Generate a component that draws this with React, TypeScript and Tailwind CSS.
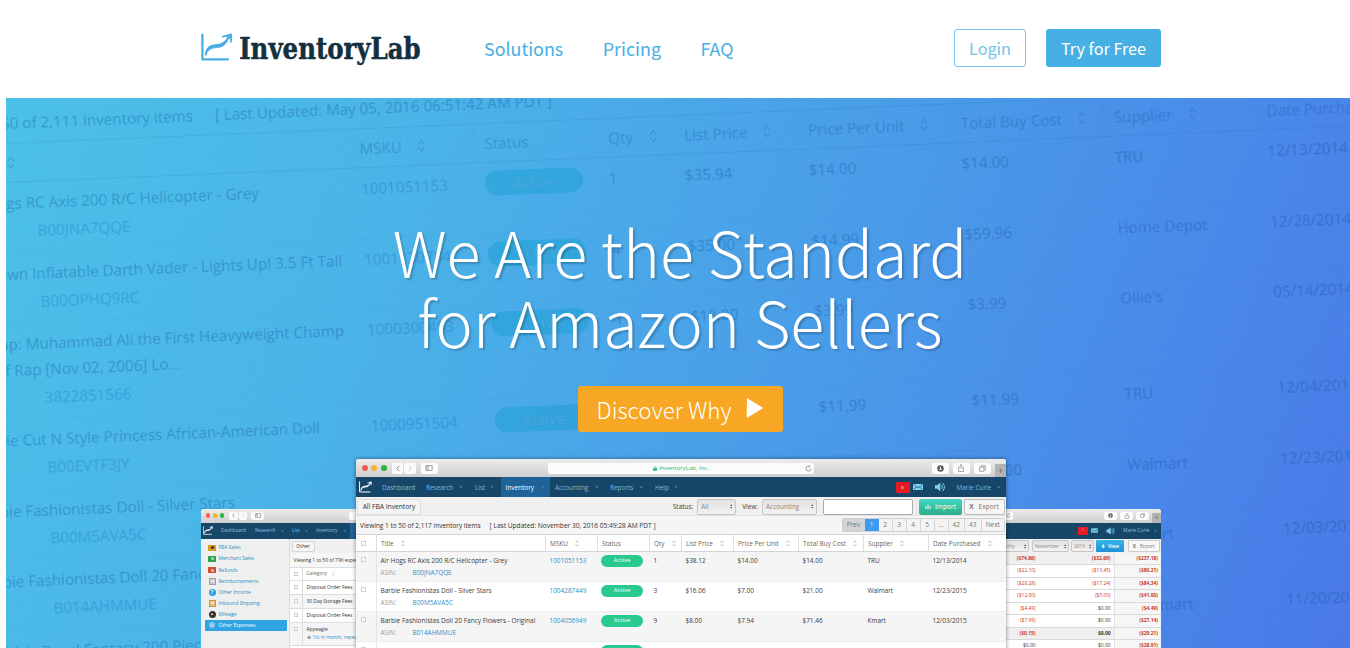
import React from "react";

const sans = "font-['Noto_Sans_CJK_SC','Source_Sans_Pro',sans-serif]";

function Swoosh({ className, color, width }: { className: string; color: string; width: number }) {
  return (
    <svg viewBox="0 0 32 28" className={className} fill="none" stroke={color} strokeWidth={width} strokeLinecap="round" strokeLinejoin="round">
      <path d="M1.4 1.5V26.3H27" />
      <path d="M4.8 21.5C5.5 15 9.5 12.4 14.5 12.2C20.5 12 24.6 10 27.6 4.2" strokeWidth={width * 0.9} />
      <path d="M4.8 21.5C5.5 15 9.5 12.4 14.5 12.2C20.5 12 24.6 10 27.6 4.2C25.6 11.5 22 14.2 15.5 14.6C10.5 15 7.2 16.5 4.8 21.5Z" fill={color} strokeWidth="0.8" />
      <path d="M21.8 3.6L30.2 1.4L29.9 8.8" strokeWidth={width * 0.8} />
      <path d="M25.5 3.2L30.2 1.4L29.4 6Z" fill={color} strokeWidth="0.6" />
    </svg>
  );
}

function Sort({ className = "" }: { className?: string }) {
  return (
    <svg viewBox="0 0 8 14" className={className} fill="none" stroke="currentColor" strokeWidth="1.3" strokeLinejoin="round">
      <path d="M1 5.5L4 1.5L7 5.5M1 8.5L4 12.5L7 8.5" />
    </svg>
  );
}

/* ---------- faded inventory table behind the headline ---------- */

type Item = { title: string[]; ends?: number[]; asin: string; msku: string; vals: string[]; tall?: boolean };

const backdrop: Item[] = [
  { title: ["Air Hogs RC Axis 200 R/C Helicopter - Grey"], asin: "B00JNA7QQE", msku: "1001051153", vals: ["1", "$35.94", "$14.00", "$14.00", "TRU", "12/13/2014"] },
  { title: ["8' Blown Inflatable Darth Vader - Lights Up! 3.5 Ft Tall"], ends: [377], asin: "B00OPHQ9RC", msku: "1001130784", vals: ["4", "$35.00", "$14.99", "$59.96", "Home Depot", "12/28/2014"] },
  { title: ["Rap: Muhammad Ali the First Heavyweight Champ", "of Rap [Nov 02, 2006] Lo..."], ends: [376, 211], asin: "3822851566", msku: "1000300493", vals: ["1", "$18.00", "$3.99", "$3.99", "Ollie's", "05/14/2014"], tall: true },
  { title: ["Barbie Cut N Style Princess African-American Doll"], asin: "B00EVTF3JY", msku: "1000951504", vals: ["1", "$25.00", "$11.99", "$11.99", "TRU", "12/04/2014"] },
  { title: ["Barbie Fashionistas Doll - Silver Stars"], asin: "B00M5AVA5C", msku: "1004287449", vals: ["3", "$16.06", "$7.00", "$21.00", "Walmart", "12/23/2015"] },
  { title: ["Barbie Fashionistas Doll 20 Fancy Flowers"], asin: "B014AHMMUE", msku: "1004056949", vals: ["9", "$8.00", "$7.94", "$71.46", "Kmart", "12/03/2015"] },
  { title: ["Barbie's Royal Fantasy 200 Piece Playset"], asin: "B00T0MJ2XK", msku: "1004056950", vals: ["2", "$12.00", "$7.94", "$15.88", "Walmart", "11/20/2015"] },
];

const bgCols: [string, string][] = [
  ["Qty", "w-[76px]"],
  ["List Price", "w-[124px]"],
  ["Price Per Unit", "w-[153px]"],
  ["Total Buy Cost", "w-[153px]"],
  ["Supplier", "w-[153px]"],
  ["Date Purchased", "w-[200px]"],
];

function Backdrop() {
  return (
    <div className="absolute left-0 top-0 w-[1500px] origin-top-left -rotate-[2.4deg] whitespace-nowrap font-['Open_Sans',sans-serif] text-[15.2px] leading-[20px] text-[#0a4a96]/25 [text-shadow:0_0_1px_rgba(10,74,150,0.12)]">
      <div className="-ml-[58px] w-[1560px]">
        <div className="flex h-[46px] items-center border-b border-[#0a4a96]/10 pt-[4px]">
          <span className="flex w-[244px] shrink-0 justify-end">Viewing 1 to 50 of 2,111 inventory items</span>
          <span className="ml-[22px]">[ Last Updated: May 05, 2016 06:51:42 AM PDT ]</span>
        </div>
        <div className="flex h-[39px] items-center border-b border-[#0a4a96]/10 text-[#0a4a96]/20">
          <span className="flex w-[399px] items-center gap-4 pl-[10px]">Title<Sort className="h-[14px] w-[8px]" /></span>
          <span className="flex h-full w-[124px] items-center gap-4 pl-[10px]">MSKU<Sort className="h-[14px] w-[8px]" /></span>
          <span className="flex h-full w-[124px] items-center border-l border-[#0a4a96]/5 pl-[10px]">Status</span>
          {bgCols.map(([name, w]) => (
            <span key={name} className={`flex h-full items-center gap-4 border-l border-[#0a4a96]/5 pl-[10px] ${w}`}>
              {name}
              <Sort className="h-[14px] w-[8px]" />
            </span>
          ))}
        </div>
        {backdrop.map((r) => (
          <div key={r.msku} className={`flex border-b border-[#0a4a96]/[0.04] pt-[10px] ${r.tall ? "h-[96px]" : "h-[70.5px]"}`}>
            <div className="w-[399px] pl-[10px]">
              {r.title.map((t, i) => (
                <div key={t} className={i ? "mt-[6px]" : ""}>
                  <div className={r.ends ? "flex justify-end" : ""} style={r.ends ? { width: r.ends[i] } : undefined}>{t}</div>
                </div>
              ))}
              <div className="mt-[8px] pl-[74px] text-[#0a82dc]/25">{r.asin}</div>
            </div>
            <span className="w-[124px] pl-[10px] text-[#0a72d0]/25">{r.msku}</span>
            <span className="w-[124px] pl-[10px]">
              <span className="-mt-[2px] flex h-[25px] w-[98px] items-center justify-center rounded-full bg-[#089cd0]/40 text-white/15">Active</span>
            </span>
            {r.vals.map((v, i) => (
              <span key={i} className={`pl-[10px] ${bgCols[i][1]}`}>{v}</span>
            ))}
          </div>
        ))}
      </div>
    </div>
  );
}

/* ---------- browser window parts ---------- */

function Chip({ className = "", children }: { className?: string; children?: React.ReactNode }) {
  return <span className={`flex shrink-0 items-center justify-center rounded-[2px] bg-[#fbfbfb] text-[#777] ${className}`}>{children}</span>;
}

const Chevron = ({ className, d, color }: { className: string; d: string; color: string }) => (
  <svg viewBox="0 0 6 10" className={className} fill="none" stroke={color} strokeWidth="1.3"><path d={d} /></svg>
);
const BACK = "M4.8 1L1.2 5L4.8 9";
const NEXT = "M1.2 1L4.8 5L1.2 9";
const Reload = ({ className }: { className: string }) => (
  <svg viewBox="0 0 10 10" className={className} fill="none" stroke="#888" strokeWidth="1.1"><path d="M8.5 5A3.5 3.5 0 1 1 6.2 1.8M5 .3L7 2L5 3.5" /></svg>
);
const Down = ({ className }: { className: string }) => (
  <svg viewBox="0 0 10 10" className={className}><circle cx="5" cy="5" r="4.6" fill="#555" /><path d="M5 2.2V7M3 5.2L5 7.4L7 5.2" stroke="#fff" strokeWidth="1.2" fill="none" /></svg>
);
const Share = ({ className }: { className: string }) => (
  <svg viewBox="0 0 10 10" className={className} fill="none" stroke="#888" strokeWidth=".9"><path d="M3.5 4H2V9.4H8V4H6.5M5 6V.7M3.3 2.3L5 .7L6.7 2.3" /></svg>
);
const Tabs = ({ className }: { className: string }) => (
  <svg viewBox="0 0 10 10" className={className} fill="none" stroke="#777" strokeWidth=".9"><path d="M1 3H7V9H1ZM3 3V1H9V7H7" /></svg>
);
const Panel = ({ className }: { className: string }) => (
  <svg viewBox="0 0 10 8" className={className} fill="none" stroke="#777" strokeWidth=".9"><path d="M.8 .8H9.2V7.2H.8ZM3.7 .8V7.2M1.5 2.4H3M1.5 4H3" /></svg>
);
const Mail = ({ className }: { className: string }) => (
  <svg viewBox="0 0 10 6" className={className}><rect width="10" height="6" rx=".6" fill="#7fd0f5" /><path d="M.8 .8L5 3.8L9.2 .8M.8 5.3L3.4 3M9.2 5.3L6.6 3" stroke="#164668" strokeWidth=".7" fill="none" /></svg>
);
const Speaker = ({ className }: { className: string }) => (
  <svg viewBox="0 0 12 11" className={className}><path d="M.5 3.5H3L6.3 .5V10.5L3 7.5H.5Z" fill="#7fd0f5" /><path d="M7.8 3.3Q9.3 5.5 7.8 7.7M8.8 1Q13 5.5 8.8 10" stroke="#7fd0f5" strokeWidth="1.1" fill="none" /></svg>
);
const Caret = ({ className }: { className: string }) => (
  <svg viewBox="0 0 6 4" className={className}><path d="M0 .3H6L3 3.8Z" fill="#3585b5" /></svg>
);
const UpDown = ({ className }: { className: string }) => (
  <svg viewBox="0 0 4 8" className={className} fill="#666"><path d="M0 3.3L2 .4L4 3.3ZM0 4.7L2 7.6L4 4.7Z" /></svg>
);

function Dots({ size, gap }: { size: string; gap: string }) {
  return (
    <span className={`flex ${gap}`}>
      <i className={`rounded-full bg-[#fb5a52] ${size}`} />
      <i className={`rounded-full bg-[#f6b52e] ${size}`} />
      <i className={`rounded-full bg-[#2bb53c] ${size}`} />
    </span>
  );
}

function Select({ label, className }: { label: string; className: string }) {
  return (
    <span className={`flex items-center justify-between rounded-[2px] border border-[#c6c6c6] bg-linear-to-b from-[#e2e2e2] to-[#f2f2f2] text-[#888] ${className}`}>
      {label}
      <UpDown className="h-[5px] w-[2.5px]" />
    </span>
  );
}

const Box = ({ className }: { className: string }) => <i className={`block border border-[#cfcfcf] bg-white ${className}`} />;

/* ---------- front window ---------- */

const items = [
  ["Air Hogs RC Axis 200 R/C Helicopter - Grey", "B00JNA7QQE", "1001051153", "1", "$38.12", "$14.00", "$14.00", "TRU", "12/13/2014"],
  ["Barbie Fashionistas Doll - Silver Stars", "B00M5AVA5C", "1004287449", "3", "$16.06", "$7.00", "$21.00", "Walmart", "12/23/2015"],
  ["Barbie Fashionistas Doll 20 Fancy Flowers - Original", "B014AHMMUE", "1004056949", "9", "$8.00", "$7.94", "$71.46", "Kmart", "12/03/2015"],
  ["", "", "", "", "", "", "", "", ""],
];
const fw = ["w-[169px]", "w-[52px]", "w-[52px]", "w-[32px]", "w-[52px]", "w-[65px]", "w-[65px]", "w-[65px]", "w-[77px]"];
const heads = ["Title", "MSKU", "Status", "Qty", "List Price", "Price Per Unit", "Total Buy Cost", "Supplier", "Date Purchased"];

function FrontWindow() {
  return (
    <div className="absolute left-[155px] top-0 h-[200px] w-[650px] overflow-hidden whitespace-nowrap rounded-t-[3px] bg-white font-['Open_Sans',sans-serif] text-[6.45px] leading-[9px] text-[#3c3c3c] shadow-[0_0_4px_rgba(0,0,0,0.45)]">
      <div className="flex h-[18px] items-center bg-linear-to-b from-[#ececec] to-[#cfcfcf] pl-[6px]">
        <Dots size="size-[6px]" gap="gap-[3.3px]" />
        <Chip className="ml-[5.4px] h-[11px] w-[11.5px]"><Chevron className="h-[7px] w-[4px]" d={BACK} color="#777" /></Chip>
        <Chip className="ml-px h-[11px] w-[11.5px]"><Chevron className="h-[7px] w-[4px]" d={NEXT} color="#c4c4c4" /></Chip>
        <Chip className="ml-[5px] h-[11px] w-[17px]"><Panel className="h-[6px] w-[8px]" /></Chip>
        <Chip className="relative ml-[110px] h-[11px] w-[266px] gap-[2px] !text-[#2dba6a]">
          <svg viewBox="0 0 6 7" className="h-[5px] w-[4px]"><path d="M0 3H6V7H0Z" fill="#2dba6a" /><path d="M1.3 3V1.8Q3-.4 4.7 1.8V3" stroke="#2dba6a" fill="none" /></svg>
          <span className="text-[6px]">InventoryLab, Inc.</span>
          <span className="absolute right-[2px] top-[2px]"><Reload className="size-[7px]" /></span>
        </Chip>
        <Chip className="ml-[118px] h-[11px] w-[17px]"><Down className="size-[7px]" /></Chip>
        <Chip className="ml-[4px] h-[11px] w-[17px]"><Share className="size-[8px]" /></Chip>
        <Chip className="ml-[4px] h-[11px] w-[17px]"><Tabs className="size-[7px]" /></Chip>
        <span className="ml-auto mt-[5px] flex h-[13px] w-[11px] items-center justify-center bg-[#b3b3b3] text-[9px] text-[#666]">+</span>
      </div>
      <div className="flex h-[20px] items-center bg-[#164668] text-[#7fb9dc]">
        <Swoosh className="ml-[3px] h-[12px] w-[13px]" color="#fff" width={2.4} />
        <span className="ml-[10px] w-[44px]">Dashboard</span>
        <span className="flex w-[49px] items-center justify-between pr-[12px]">Research<Caret className="h-[2.5px] w-[4px]" /></span>
        <span className="flex w-[26px] items-center justify-between pr-[7px]">List<Caret className="h-[2.5px] w-[4px]" /></span>
        <span className="flex h-full w-[49px] items-center justify-between bg-[#20629a] pl-[4.5px] pr-[5px] text-white">Inventory<Caret className="h-[2.5px] w-[4px]" /></span>
        <span className="flex w-[55px] items-center justify-between pl-[5px] pr-[6px]">Accounting<Caret className="h-[2.5px] w-[4px]" /></span>
        <span className="flex w-[45px] items-center justify-between pl-[5px] pr-[7px]">Reports<Caret className="h-[2.5px] w-[4px]" /></span>
        <span className="flex w-[30px] items-center justify-between pl-[5px] pr-[2px]">Help<Caret className="h-[2.5px] w-[4px]" /></span>
        <span className="ml-auto flex h-[11px] w-[14px] items-center justify-center rounded-[1px] bg-[#e61c24] text-[4px] text-white">8</span>
        <Mail className="ml-[3.5px] h-[6px] w-[10px]" />
        <Speaker className="ml-[11px] h-[10px] w-[12px]" />
        <span className="ml-[10.5px] w-[40px]">Marie Curie</span>
        <Caret className="mr-[5.5px] h-[2.5px] w-[4px]" />
      </div>
      <div className="flex h-[19px] items-center border-b border-[#e2e2e2] bg-[#f0f0f0] pt-px">
        <span className="ml-px flex h-[16px] w-[64px] items-center justify-center rounded-[2px] border border-[#ddd] bg-[#f4f4f4] text-[6.7px] text-[#333]">All FBA Inventory</span>
        <span className="ml-auto">Status:</span>
        <Select label="All" className="ml-[4px] h-[16px] w-[39px] px-[3px]" />
        <span className="ml-[6px]">View:</span>
        <Select label="Accounting" className="ml-[4px] h-[16px] w-[55px] px-[3px]" />
        <span className="ml-[6px] h-[16px] w-[90px] rounded-[2px] border border-[#aaa] bg-white" />
        <span className="ml-[3px] h-full w-px bg-[#ddd]" />
        <span className="ml-[2px] flex h-[16px] w-[43px] items-center justify-center gap-[4px] rounded-[2px] bg-linear-to-b from-[#41d8c6] to-[#2cae86] text-[6.6px] text-white">
          <svg viewBox="0 0 8 6" className="h-[5px] w-[6px]" fill="none" stroke="#fff"><path d="M.6 2.5V5.4H7.4V2.5M4 0V3.8M2.5 2.4L4 3.9L5.5 2.4" /></svg>
          Import
        </span>
        <span className="ml-[1.5px] mr-[1.5px] flex h-[16px] w-[41px] items-center justify-center gap-[5px] rounded-[2px] border border-[#bbb] bg-[#f6f6f6] text-[6.6px] text-[#777]"><b>X</b>Export</span>
      </div>
      <div className="flex h-[19px] items-center border-b border-[#d4d4d4] bg-[#f5f5f5] pl-[4px] pr-[1px]">
        <span className="text-[6.5px] text-[#333]">Viewing 1 to 50 of 2,117 inventory items</span>
        <span className="ml-[9px] text-[6.6px] text-[#333]">[ Last Updated: November 30, 2016 05:49:28 AM PDT ]</span>
        <span className="-mt-[1px] ml-auto flex h-[14px] items-stretch rounded-[2px] border border-[#cfcfcf] bg-[#f4f4f4] text-[#777]">
          <span className="flex w-[22px] items-center justify-center bg-[#d3d3d3]">Prev</span>
          <span className="flex w-[14px] items-center justify-center bg-[#3d9bf2] text-white/80">1</span>
          {["2", "3", "4", "5", "..."].map((p) => (
            <span key={p} className="flex w-[14px] items-center justify-center border-r border-[#d4d4d4]">{p}</span>
          ))}
          <span className="flex w-[16.5px] items-center justify-center border-r border-[#d4d4d4]">42</span>
          <span className="flex w-[16.5px] items-center justify-center border-r border-[#d4d4d4]">43</span>
          <span className="flex w-[22.5px] items-center justify-center">Next</span>
        </span>
      </div>
      <div className="flex h-[17px] border-b border-[#d4d4d4] bg-white text-[#666]">
        <span className="flex w-[20px] items-center pl-[5px]"><Box className="size-[5px]" /></span>
        {heads.map((h, i) => (
          <span key={h} className={`flex items-center gap-[7px] border-l border-[#dedede] pl-[4px] pt-px ${fw[i]}`}>
            {h}
            {h !== "Status" && <Sort className="h-[7px] w-[4px] text-[#aaa]" />}
          </span>
        ))}
      </div>
      {items.map((r, n) => (
        <div key={n} className={`flex h-[30px] border-b border-[#ededed] pt-[3px] ${n % 2 ? "bg-white" : "bg-[#f5f5f5]"}`}>
          <span className="w-[20px] pl-[5px] pt-[2px]"><Box className="size-[5px]" /></span>
          <span className={`-mt-[3px] border-l border-[#e4e4e4] pl-[3.5px] pt-[4px] text-[6.5px] ${fw[0]}`}>
            <span className="block">{r[0]}</span>
            {r[1] && <span className="mt-[3px] flex text-[6.4px] text-[#999]"><span className="w-[32px]">ASIN:</span><span className="text-[#2b93cc]">{r[1]}</span></span>}
          </span>
          <span className={`pl-[4.5px] pt-px text-[#2b93cc] ${fw[1]}`}>{r[2]}</span>
          <span className={`pl-[4px] ${fw[2]}`}><span className="flex h-[11.5px] w-[42px] items-center justify-center rounded-full bg-[#29ca8e] text-[6px] text-white">Active</span></span>
          {r.slice(3).map((v, i) => (
            <span key={i} className={`pl-[4.5px] pt-px ${fw[i + 3]}`}>{v}</span>
          ))}
        </div>
      ))}
    </div>
  );
}

/* ---------- rear windows ---------- */

const side: [string, string][] = [
  ["FBA Sales", "bg-[#d39a2c]"],
  ["Merchant Sales", "bg-[#2fa24c]"],
  ["Refunds", "bg-[#cf5134]"],
  ["Reimbursements", "bg-[#c9c9d2]"],
  ["Other Income", "bg-[#2b9fe0]"],
  ["Inbound Shipping", "bg-[#efbd6c]"],
  ["Mileage", "bg-[#333]"],
  ["Other Expenses", ""],
];

function SideIcon({ i, bg }: { i: number; bg: string }) {
  if (i < 3)
    return <span className={`flex h-[5.5px] w-[8px] items-center justify-center ${bg}`}><i className={`size-[3px] rounded-full ${i ? "bg-white/60" : "bg-[#333]"}`} /></span>;
  if (i === 3 || i === 5) return <span className={`mx-[0.5px] block size-[7px] border border-black/20 p-px ${bg}`}><i className="block h-[2px] w-full border-y border-white/60" /></span>;
  if (i === 7) return <span className="mx-[1px] flex size-[6px] items-center justify-center rounded-full bg-white/40 text-[4px] text-white">?</span>;
  return <span className={`mx-[0.5px] flex size-[7px] items-center justify-center rounded-full text-[5px] font-bold text-white ${bg}`}>{i === 4 ? "?" : "•"}</span>;
}

const expenses = ["Disposal Order Fees", "30 Day Storage Fees", "Disposal Order Fees"];

function LeftWindow() {
  return (
    <div className="h-[150px] w-[480px] overflow-hidden rounded-tl-[3px] bg-white">
      <div className="flex h-[13.5px] items-center bg-linear-to-b from-[#ececec] to-[#cfcfcf] pl-[4.5px]">
        <Dots size="size-[4.6px]" gap="gap-[2.6px]" />
        <Chip className="ml-[5px] h-[8px] w-[8.5px]"><Chevron className="h-[5px] w-[3px]" d={BACK} color="#777" /></Chip>
        <Chip className="ml-px h-[8px] w-[8.5px]"><Chevron className="h-[5px] w-[3px]" d={NEXT} color="#c4c4c4" /></Chip>
        <Chip className="ml-[4px] h-[8px] w-[13px]"><Panel className="h-[5px] w-[6px]" /></Chip>
        <Chip className="ml-[85px] h-[8px] w-[200px]" />
      </div>
      <div className="flex h-[16.5px] items-center bg-[#164668] text-[4.85px] text-[#8cc3e3]">
        <Swoosh className="ml-[2px] h-[9px] w-[10px]" color="#fff" width={2.4} />
        <span className="ml-[8px] w-[34px]">Dashboard</span>
        <span className="flex w-[37px] items-center justify-between pr-[8px]">Research<Caret className="h-[2px] w-[3px]" /></span>
        <span className="flex w-[24px] items-center justify-between pr-[8px]">List<Caret className="h-[2px] w-[3px]" /></span>
        <span className="flex w-[34px] items-center justify-between pr-[4px]">Inventory<Caret className="h-[2px] w-[3px]" /></span>
        <span className="flex h-full w-[45px] items-center bg-[#20629a] pl-[6px] text-white">Accounting</span>
      </div>
      <div className="flex h-[120px]">
        <div className="w-[88.5px] border-r border-[#ddd] bg-[#eef0f0] pl-[4px] pt-[3.4px]">
          {side.map(([t, c], i) => (
            <div key={t} className={`flex h-[11.05px] items-center gap-[2.5px] pl-[3px] text-[5px] ${i === 7 ? "w-[82px] rounded-[1px] bg-[#31a3e2] text-white" : "text-[#2b8cc4]"}`}>
              <SideIcon i={i} bg={c} />
              {t}
            </div>
          ))}
        </div>
        <div className="flex-1">
          <div className="flex h-[14px] items-center bg-[#f0f0f0] pl-[2px]"><span className="flex h-[11px] w-[23px] items-center justify-center rounded-[1px] border border-[#d8d8d8] bg-[#f5f5f5]">Other</span></div>
          <div className="flex h-[15px] items-center border-b border-[#ddd] bg-[#f7f7f7] pl-[4px]">Viewing 1 to 50 of 796 expenses</div>
          <div className="flex h-[12.5px] items-stretch border-b border-[#ddd]">
            <span className="flex w-[12px] items-center pl-[4px]"><Box className="size-[4px]" /></span>
            <span className="flex items-center gap-[5px] border-l border-[#ddd] pl-[4px] text-[#666]">Category<Sort className="h-[5px] w-[3px] text-[#aaa]" /></span>
          </div>
          {expenses.map((e, i) => (
            <div key={i} className={`flex h-[14px] items-stretch border-b border-[#ddd] ${i % 2 ? "bg-[#f5f5f5]" : ""}`}>
              <span className="flex w-[12px] items-center pl-[4px]"><Box className="size-[4px]" /></span>
              <span className="flex items-center border-l border-[#ddd] pl-[4px]">{e}</span>
            </div>
          ))}
          <div className="flex h-[23px] border-b border-[#ddd] bg-[#f5f5f5]">
            <span className="w-[12px] pl-[4px] pt-[4px]"><Box className="size-[4px]" /></span>
            <span className="border-l border-[#ddd] pl-[4px] pt-[3px]">
              <span className="block">Appeagle</span>
              <span className="mt-[1.5px] block text-[#2b93cc]"><span className="mr-[2px] text-[#666]">⊕</span>1st in month, repeating</span>
            </span>
          </div>
        </div>
      </div>
    </div>
  );
}

const totals = [
  ["($74.86)", "($32.69)", "($237.18)"],
  ["($22.10)", "($10.45)", "($80.21)"],
  ["($28.28)", "($17.24)", "($84.34)"],
  ["($12.00)", "($5.00)", "($41.00)"],
  ["($4.49)", "$0.00", "($4.49)"],
  ["($7.99)", "$0.00", "($27.14)"],
  ["($0.15)", "$0.00", "($29.21)"],
  ["$0.00", "$0.00", "($28.91)"],
];

const tone = (v: string) => (v.startsWith("(") ? "text-[#cc3824]" : "text-[#333]");

function RightWindow() {
  return (
    <div className="h-[150px] w-[480px] overflow-hidden rounded-tr-[3px] bg-white">
      <div className="flex h-[13.5px] items-center justify-end bg-linear-to-b from-[#ececec] to-[#cfcfcf]">
        <Chip className="h-[8px] w-[200px] !justify-end pr-[2px]"><Reload className="size-[5px]" /></Chip>
        <Chip className="ml-[91px] h-[8px] w-[13px]"><Down className="size-[5px]" /></Chip>
        <Chip className="ml-[3px] h-[8px] w-[13px]"><Share className="size-[6px]" /></Chip>
        <Chip className="ml-[3px] h-[8px] w-[13px]"><Tabs className="size-[5px]" /></Chip>
        <span className="ml-[3px] mt-[4px] flex h-[9.5px] w-[9px] items-center justify-center bg-[#b3b3b3] text-[7px] text-[#666]">+</span>
      </div>
      <div className="flex h-[16.5px] items-center justify-end bg-[#164668] text-[#8cc3e3]">
        <span className="flex h-[8px] w-[10.5px] items-center justify-center bg-[#e61c24] text-[3px] text-white">1</span>
        <Mail className="ml-[2.5px] h-[5px] w-[7.5px]" />
        <Speaker className="ml-[8px] h-[8px] w-[9px]" />
        <span className="ml-[8px] w-[30.5px]">Marie Curie</span>
        <Caret className="mr-[4.5px] h-[2px] w-[3px]" />
      </div>
      <div className="flex h-[13.5px] items-center justify-end bg-[#f0f0f0] pr-[1.5px] pt-px">
        <Select label="Monthly" className="h-[12px] w-[36px] px-[2px]" />
        <Select label="November" className="ml-[3px] h-[12px] w-[37px] px-[2px]" />
        <Select label="2016" className="ml-[2px] h-[12px] w-[23px] px-[2px]" />
        <span className="ml-[2px] flex h-[12px] w-[28px] items-center justify-center gap-[3px] rounded-[1px] bg-linear-to-b from-[#35b5ea] to-[#1f90d6] font-semibold text-white"><span>⇟</span>View</span>
        <span className="ml-[4px] flex h-[12px] w-[31.5px] items-center justify-center gap-[4px] rounded-[1px] border border-[#ccc] bg-[#f8f8f8] text-[#777]"><b>X</b>Export</span>
      </div>
      {totals.map((r, i) => (
        <div key={i} className={`flex h-[12.5px] items-stretch justify-end border-b border-[#d9d9d9] ${i === 0 || i === 6 ? "bg-[#efefef] font-bold" : ""}`}>
          <span className={`flex w-[76px] items-center justify-end ${tone(r[0])}`}>{r[0]}</span>
          <span className={`flex w-[79px] items-center justify-end border-r border-[#e2e2e2] pr-[3px] ${tone(r[1])}`}>{r[1]}</span>
          <span className={`flex w-[46.5px] items-center justify-end bg-[#f6f6f6] pr-[3px] font-bold ${tone(r[2])}`}>{r[2]}</span>
        </div>
      ))}
    </div>
  );
}

export default function App() {
  return (
    <div className={`h-[648px] w-[1350px] overflow-hidden bg-white ${sans}`}>
      <header className="ml-[201px] flex h-[98px] w-[960px] items-center pb-[2px] text-[18px] leading-[26px] text-[#46afe3]">
        <a className="flex h-[98px] w-[283px] items-center">
          <Swoosh className="-mt-[3px] h-[28px] w-[32px]" color="#46afe3" width={2.2} />
          <svg viewBox="0 0 186 40" className="ml-[5px] mt-[3px] h-[40px] w-[186px]">
            <text x="1.2" y="29" textLength="181.5" lengthAdjust="spacingAndGlyphs" fill="#123040" stroke="#123040" strokeWidth="0.5" className="font-['DejaVu_Serif_Condensed','DejaVu_Serif',serif] text-[30.5px] font-bold">InventoryLab</text>
          </svg>
        </a>
        <nav className="-mt-px flex gap-[39.5px] text-[17.9px]">
          <a>Solutions</a>
          <a>Pricing</a>
          <a>FAQ</a>
        </nav>
        <div className="ml-auto flex gap-[20px] text-[16.2px]">
          <a className="flex h-[38px] w-[72px] items-center justify-center rounded-[3px] border border-[#7cc7ec] text-[#74c3ea]">Login</a>
          <a className="flex h-[38px] w-[115px] items-center justify-center whitespace-nowrap rounded-[3px] bg-[#46afe3] text-white">Try for Free</a>
        </div>
      </header>

      <section className="relative ml-[6px] h-[550px] w-[1344px] overflow-hidden bg-[linear-gradient(112deg,#46c1ea_0%,#45b3ea_28%,#449bea_58%,#4484ec_84%,#4476e9_100%)]">
        <Backdrop />
        <svg className="absolute inset-0 h-full w-full opacity-[0.09]">
          <filter id="grain"><feTurbulence type="fractalNoise" baseFrequency="0.7" numOctaves="2" /><feColorMatrix type="saturate" values="0" /></filter>
          <rect width="100%" height="100%" filter="url(#grain)" />
        </svg>
        <div className="relative ml-[194px] flex w-[960px] flex-col items-center pt-[118px]">
          <h1 className="whitespace-nowrap text-center text-[62.9px] font-light leading-[70px] text-white [text-shadow:2px_2px_2px_rgba(0,0,0,0.2)]">
            We Are the Standard
            <br />
            for Amazon Sellers
          </h1>
          <a className="mt-[30px] flex h-[46px] w-[205px] items-center justify-center gap-[15px] rounded-[3px] bg-[#f8a724] text-[22.5px] font-light leading-[46px] text-white">
            <span className="whitespace-nowrap">Discover Why</span>
            <svg viewBox="0 0 17 20" className="-mt-[3px] h-[20px] w-[17px]" fill="#fff"><path d="M1 .8Q.6 0 1.6 .4L16.4 9.6Q17 10 16.4 10.5L1.6 19.6Q.6 20 .6 19Z" /></svg>
          </a>
          <div className="relative left-px mt-[27px] h-[200px] w-[960px]">
            <div className="flex whitespace-nowrap pt-[50px] font-['Open_Sans',sans-serif] text-[4.9px] leading-[7px] text-[#333]">
              <LeftWindow />
              <RightWindow />
            </div>
            <FrontWindow />
          </div>
        </div>
      </section>
    </div>
  );
}
